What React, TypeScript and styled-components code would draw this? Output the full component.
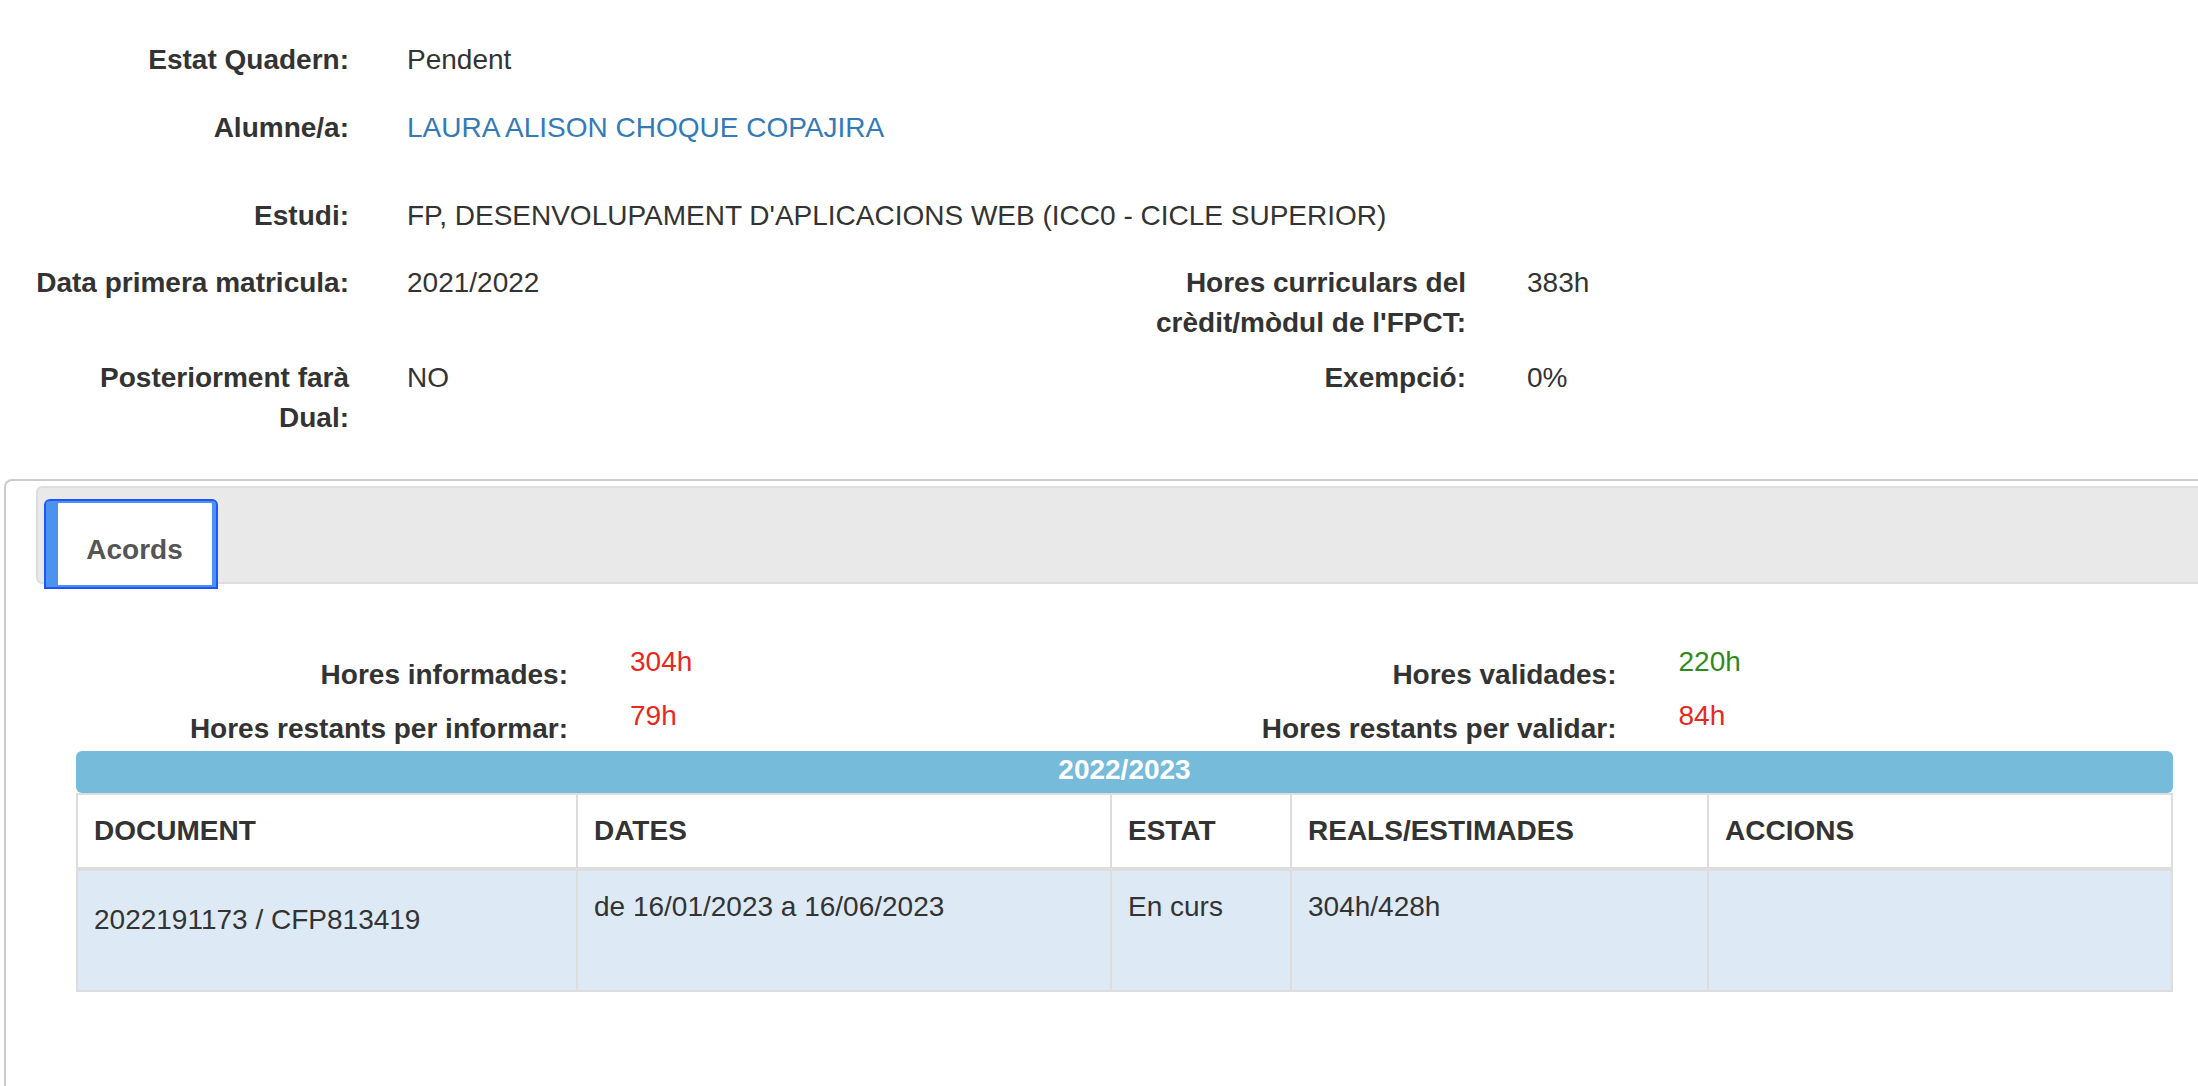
import React from "react";
import styled, { createGlobalStyle } from "styled-components";

const Global = createGlobalStyle`
  html, body {
    margin: 0;
    padding: 0;
    background: #ffffff;
    overflow: hidden;
  }
  body {
    font-family: "Liberation Sans", Arial, Helvetica, sans-serif;
    font-size: 28px;
    line-height: 40px;
    color: #333333;
  }
  * { box-sizing: border-box; }
`;

const Page = styled.div`
  width: 2198px;
  padding-top: 40px;
`;

const InfoRow = styled.div<{ $mb: number }>`
  display: grid;
  grid-template-columns: 1099px 1fr;
  margin-bottom: ${(p) => p.$mb}px;
`;

const Field = styled.div<{ $pad: number; $gap: number }>`
  display: grid;
  grid-template-columns: 320px 1fr;
  column-gap: ${(p) => p.$gap}px;
  padding-left: ${(p) => p.$pad}px;
  align-items: start;
`;

const FullField = styled(Field)`
  grid-column: 1 / -1;
`;

const Label = styled.div`
  font-weight: bold;
  text-align: right;
  color: #333333;
`;

const Value = styled.div`
  color: #333333;
  white-space: nowrap;
`;

const Link = styled.a`
  color: #337ab7;
  text-decoration: none;
`;

const Panel = styled.div`
  margin: 41px 0 0 4px;
  width: 2260px;
  height: 607px;
  border: 2px solid #cccccc;
  border-bottom: none;
  border-radius: 8px 8px 0 0;
  padding: 5px 0 0 30px;
  background: #ffffff;
`;

const TabStrip = styled.div`
  display: flex;
  align-items: flex-start;
  height: 98px;
  padding: 11px 6px 0;
  background: #e9e9e9;
  border: 2px solid #dddddd;
  border-radius: 6px;
`;

const Tab = styled.div`
  position: relative;
  z-index: 1;
  width: 174px;
  height: 90px;
  padding: 29px 5px 0 12px;
  border: 2px solid #1f55ff;
  border-radius: 6px 6px 0 0;
  background: #ffffff;
  box-shadow: inset 12px 0 0 #4b93ee, inset -4px 0 0 #4b93ee,
    inset 0 2px 0 #4b93ee, inset 0 -2px 0 #4b93ee;
  font-weight: bold;
  color: #555555;
  text-align: center;
`;

const TabBody = styled.div`
  width: 2097px;
  margin-left: 40px;
  padding-top: 58px;
`;

const StatsGrid = styled.div`
  display: grid;
  grid-template-columns: 1fr 1fr;
  margin-bottom: 1px;
`;

const StatRow = styled.div`
  display: grid;
  grid-template-columns: 492px 1fr;
  column-gap: 62px;
  height: 54px;
`;

const StatLabel = styled.div`
  font-weight: bold;
  text-align: right;
  padding-top: 13px;
  white-space: nowrap;
`;

const StatValue = styled.div<{ $color: string }>`
  color: ${(p) => p.$color};
`;

const YearBar = styled.div`
  height: 42px;
  line-height: 38px;
  background: #77bbdb;
  border-radius: 6px;
  color: #ffffff;
  font-weight: bold;
  text-align: center;
`;

const Table = styled.div`
  display: grid;
  grid-template-columns: 500px 534px 180px 417px 464px;
  border-top: 2px solid #dddddd;
  border-right: 2px solid #dddddd;
  border-bottom: 2px solid #dddddd;
`;

const HeadCell = styled.div`
  border-left: 2px solid #dddddd;
  border-bottom: 4px solid #dddddd;
  padding: 16px 16px;
  font-weight: bold;
  color: #333333;
  background: #ffffff;
  white-space: nowrap;
`;

const BodyCell = styled.div<{ $top: number }>`
  border-left: 2px solid #dddddd;
  height: 119px;
  padding: ${(p) => p.$top}px 16px 16px;
  background: #ddeaf6;
  color: #333333;
  white-space: nowrap;
`;

type Stat = { label: string; value: string; color: string };

const leftStats: Stat[] = [
  { label: "Hores informades:", value: "304h", color: "#e8281e" },
  { label: "Hores restants per informar:", value: "79h", color: "#e8281e" },
];
const rightStats: Stat[] = [
  { label: "Hores validades:", value: "220h", color: "#2f8a1c" },
  { label: "Hores restants per validar:", value: "84h", color: "#e8281e" },
];

const headers = ["DOCUMENT", "DATES", "ESTAT", "REALS/ESTIMADES", "ACCIONS"];
const row = [
  { text: "2022191173 / CFP813419", top: 29 },
  { text: "de 16/01/2023 a 16/06/2023", top: 16 },
  { text: "En curs", top: 16 },
  { text: "304h/428h", top: 16 },
  { text: "", top: 16 },
];

const StatColumn = ({ stats }: { stats: Stat[] }) => (
  <div>
    {stats.map((s) => (
      <StatRow key={s.label}>
        <StatLabel>{s.label}</StatLabel>
        <StatValue $color={s.color}>{s.value}</StatValue>
      </StatRow>
    ))}
  </div>
);

export default function App() {
  return (
    <>
      <Global />
      <Page>
        <InfoRow $mb={28}>
          <FullField $pad={29} $gap={58}>
            <Label>Estat Quadern:</Label>
            <Value>Pendent</Value>
          </FullField>
        </InfoRow>
        <InfoRow $mb={48}>
          <FullField $pad={29} $gap={58}>
            <Label>Alumne/a:</Label>
            <Value>
              <Link href="#">LAURA ALISON CHOQUE COPAJIRA</Link>
            </Value>
          </FullField>
        </InfoRow>
        <InfoRow $mb={27}>
          <FullField $pad={29} $gap={58}>
            <Label>Estudi:</Label>
            <Value>FP, DESENVOLUPAMENT D'APLICACIONS WEB (ICC0 - CICLE SUPERIOR)</Value>
          </FullField>
        </InfoRow>
        <InfoRow $mb={15}>
          <Field $pad={29} $gap={58}>
            <Label>Data primera matricula:</Label>
            <Value>2021/2022</Value>
          </Field>
          <Field $pad={47} $gap={61}>
            <Label>Hores curriculars del crèdit/mòdul de l'FPCT:</Label>
            <Value>383h</Value>
          </Field>
        </InfoRow>
        <InfoRow $mb={0}>
          <Field $pad={29} $gap={58}>
            <Label>Posteriorment farà Dual:</Label>
            <Value>NO</Value>
          </Field>
          <Field $pad={47} $gap={61}>
            <Label>Exempció:</Label>
            <Value>0%</Value>
          </Field>
        </InfoRow>

        <Panel>
          <TabStrip>
            <Tab>Acords</Tab>
          </TabStrip>
          <TabBody>
            <StatsGrid>
              <StatColumn stats={leftStats} />
              <StatColumn stats={rightStats} />
            </StatsGrid>
            <YearBar>2022/2023</YearBar>
            <Table>
              {headers.map((h) => (
                <HeadCell key={h}>{h}</HeadCell>
              ))}
              {row.map((c, i) => (
                <BodyCell key={i} $top={c.top}>
                  {c.text}
                </BodyCell>
              ))}
            </Table>
          </TabBody>
        </Panel>
      </Page>
    </>
  );
}
